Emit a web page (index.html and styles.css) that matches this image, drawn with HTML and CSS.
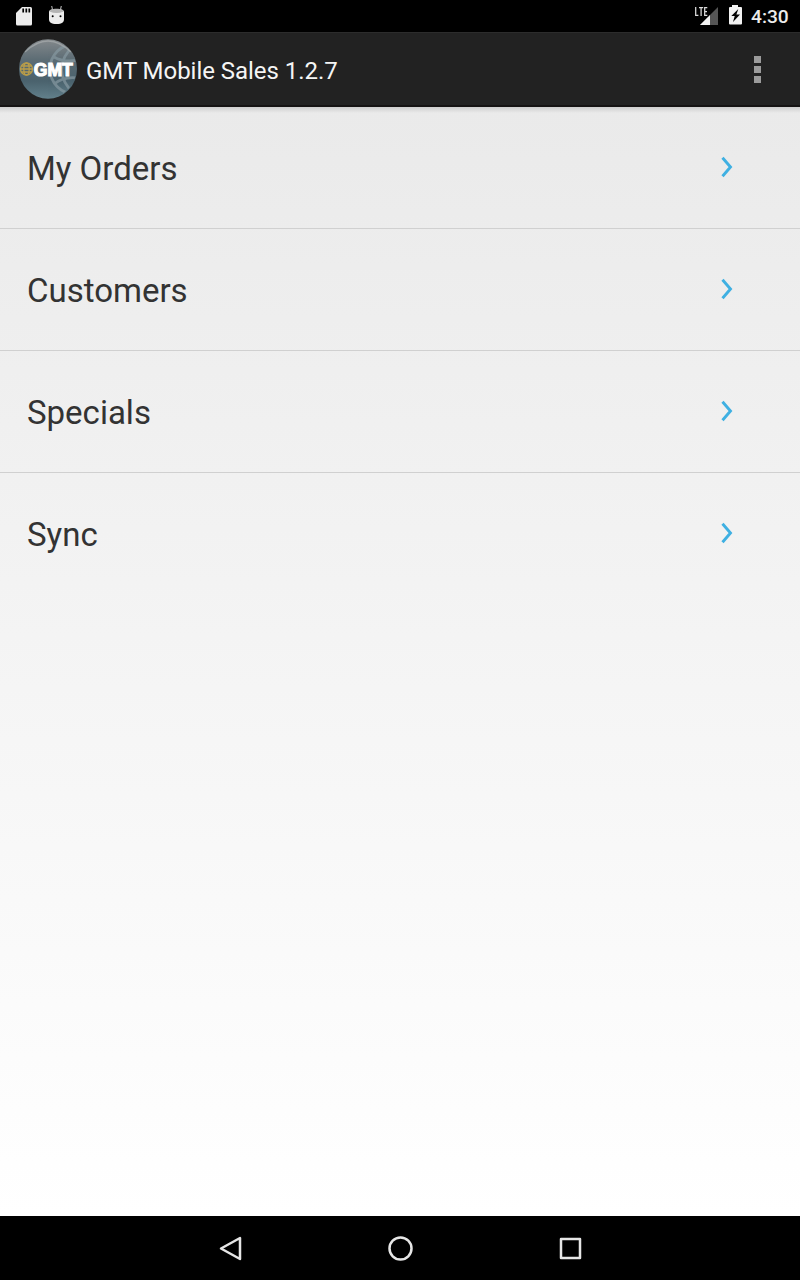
FILE: index.html
```html
<!DOCTYPE html>
<html lang="en">
<head>
<meta charset="utf-8">
<title>GMT Mobile Sales</title>
<link rel="stylesheet" href="styles.css">
</head>
<body>
<div class="screen">
  <header class="status">
    <svg class="status-left" width="90" height="32" viewBox="0 0 90 32">
      <path fill="#ececec" d="M22 7h8.500a1.500 1.500 0 0 1 1.500 1.500v15.500a1.500 1.500 0 0 1-1.500 1.500h-13a1.500 1.500 0 0 1-1.500-1.500v-11z"/>
      <path stroke="#000" stroke-width="1.700" d="M23.200 8.500v4M26.300 8.500v4M29.300 8.500v4"/>
      <path stroke="#b8b8b8" stroke-width="1.100" d="M51.700 6l.9 4M61.300 6l-.9 4"/>
      <path fill="#ececec" d="M49 12c0-2 2-3 7.500-3s7.500 1 7.500 3v7c0 3.500-2 5-7.500 5s-7.500-1.500-7.500-5z"/>
      <path fill="#b4b4b4" d="M49.500 11.500c.5-2 2.500-2.800 7-2.800s6.500.8 7 2.800q-7 3-14 0z"/>
      <circle cx="52.700" cy="16.200" r="1"/><circle cx="60.500" cy="16.200" r="1"/>
    </svg>
    <div class="status-right">
      <svg width="70" height="32" viewBox="680 0 70 32">
        <path fill="#555" d="M718 7v18h-18z"/>
        <path fill="#000" d="M694 5h15v12h-15z"/>
        <path fill="#f2f2f2" d="M710 15v10h-10z"/>
        <g fill="none" stroke="#ddd" stroke-width="1.250"><path d="M695.700 7v8.300h2.700M699 7.700h4.200M701.100 7.700v8.300M707.300 7.700h-2.600v7.600h2.600M704.700 11.500h2.300"/></g>
        <path fill="#f2f2f2" d="M732 5h6v2h3a1 1 0 0 1 1 1v15.500a1 1 0 0 1-1 1h-11a1 1 0 0 1-1-1v-15.500a1 1 0 0 1 1-1h2z"/>
        <path fill="#000" d="M738.300 9l-7 7h3.400l-1.700 6 7-7.500h-3.600z"/>
      </svg>
      <span class="clock">4:30</span>
    </div>
  </header>

  <div class="actionbar">
    <svg class="logo" width="60" height="62" viewBox="0 0 60 62">
      <defs>
        <linearGradient id="ball" x1="0" y1="0" x2="0" y2="1">
          <stop offset="0" stop-color="#84898c"/><stop offset=".35" stop-color="#5c6c74"/>
          <stop offset=".7" stop-color="#4a626d"/><stop offset="1" stop-color="#62808b"/>
        </linearGradient>
        <clipPath id="disc"><circle cx="30" cy="31" r="28.500"/></clipPath>
      </defs>
      <ellipse cx="30" cy="31" rx="29" ry="29.800" fill="url(#ball)"/>
      <g clip-path="url(#disc)" fill="none" stroke="#8799a1" stroke-width="2.800" opacity=".7">
        <circle cx="57" cy="31" r="25"/>
        <path d="M57 6Q30 31 57 57M36 19q10 6 24 3M36 46q10-8 24-6"/>
      </g>
      <path d="M7 14Q30-8 53 14" fill="none" stroke="#a8acae" stroke-width="1.200" opacity=".7"/>
      <g fill="none" stroke="#b99d49" stroke-width="1.300">
        <circle cx="8.500" cy="31" r="6"/><ellipse cx="8.500" cy="31" rx="2.700" ry="6"/><path d="M2.500 31h12M3.500 28h10M3.500 34h10"/>
      </g>
      <text class="logo-text" x="15.800" y="37.500" textLength="39" lengthAdjust="spacingAndGlyphs">GMT</text>
    </svg>
    <h1 class="title">GMT Mobile Sales 1.2.7</h1>
    <div class="overflow"><i></i><i></i><i></i></div>
  </div>

  <main class="menu">
    <div class="row"><span>My Orders</span><svg class="chevron" width="14" height="22" viewBox="0 0 14 22"><path d="M2.500 1.800l8 9.200-8 9.200"/></svg></div>
    <div class="row"><span>Customers</span><svg class="chevron" width="14" height="22" viewBox="0 0 14 22"><path d="M2.500 1.800l8 9.200-8 9.200"/></svg></div>
    <div class="row"><span>Specials</span><svg class="chevron" width="14" height="22" viewBox="0 0 14 22"><path d="M2.500 1.800l8 9.200-8 9.200"/></svg></div>
    <div class="row"><span>Sync</span><svg class="chevron" width="14" height="22" viewBox="0 0 14 22"><path d="M2.500 1.800l8 9.200-8 9.200"/></svg></div>
  </main>

  <nav class="navbar">
    <svg width="30" height="30" viewBox="0 0 30 30"><path d="M6 13.500L25 3v21z"/></svg>
    <svg width="30" height="30" viewBox="0 0 30 30"><circle cx="15.500" cy="13.500" r="11"/></svg>
    <svg width="30" height="30" viewBox="0 0 30 30"><path d="M6 4h19v19h-19z"/></svg>
  </nav>
</div>
</body>
</html>
```
FILE: styles.css
```css
body {
  margin: 0;
  font-family: Roboto, "Noto Sans", sans-serif;
}
svg {
  display: block;
  flex: none;
}
.screen {
  width: 800px;
  height: 1280px;
  display: flex;
  flex-direction: column;
  overflow: hidden;
}
.status {
  height: 32px;
  background: #000;
  display: flex;
  justify-content: space-between;
}
.status-right {
  display: flex;
  width: 120px;
}
.clock {
  margin-left: 1px;
  color: #ececec;
  font-size: 19.2px;
  font-weight: 500;
  line-height: 33px;
}
.actionbar {
  box-sizing: border-box;
  height: 75px;
  background: #222;
  border-top: 1px solid #2c2c2c;
  border-bottom: 2px solid #151313;
  display: flex;
  align-items: center;
  padding: 0 39px 0 18px;
}
.logo {
  margin-top: -1px;
}
.logo-text {
  font-family: "Liberation Sans", Arial, sans-serif;
  font-weight: bold;
  font-size: 18.5px;
  fill: #fff;
  stroke: #fff;
  stroke-width: 1.2px;
}
.title {
  margin: 4px 0 0 8px;
  font-size: 24px;
  font-weight: 400;
  line-height: 28px;
  letter-spacing: -.04px;
  color: #f5f5f5;
}
.overflow {
  margin-left: auto;
  display: flex;
  flex-direction: column;
  gap: 3px;
}
.overflow i {
  width: 7px;
  height: 7px;
  background: #9b9b9b;
}
.menu {
  flex: 1;
  background: linear-gradient(#cfcfcf, rgba(220, 220, 220, 0)) top / 100% 6px no-repeat,
    linear-gradient(#eaeaea, #fff);
}
.row {
  box-sizing: border-box;
  height: 122px;
  border-bottom: 1px solid #d0d0d0;
  display: flex;
  justify-content: space-between;
  align-items: center;
  padding: 2px 66px 0 27px;
  font-size: 33px;
  color: #333;
}
.row:last-child {
  border-bottom-color: transparent;
}
.chevron {
  margin-top: -3px;
  fill: none;
  stroke: #3fb0e2;
  stroke-width: 2.9;
}
.navbar {
  height: 64px;
  background: #000;
  display: flex;
  justify-content: center;
  align-items: center;
  gap: 140px;
}
.navbar svg {
  margin-top: 4px;
  fill: none;
  stroke: #e6e6e6;
  stroke-width: 2.5;
  stroke-linejoin: round;
}
```
